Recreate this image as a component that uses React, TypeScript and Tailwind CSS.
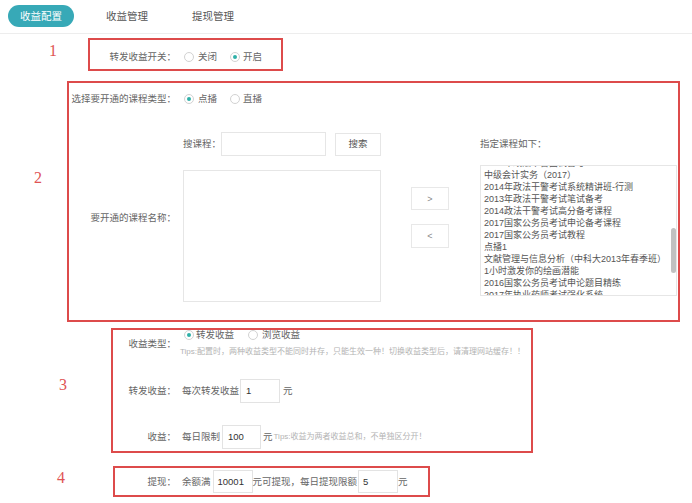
import React from "react";

function Radio({ checked }: { checked?: boolean }) {
  return (
    <span className="flex h-[10px] w-[10px] shrink-0 items-center justify-center rounded-full border border-[#d2d2d2] bg-white">
      {checked && <span className="h-[4px] w-[4px] rounded-full bg-[#2fb0a8]" />}
    </span>
  );
}

function Num({ children, cls }: { children: React.ReactNode; cls: string }) {
  return (
    <div className={"shrink-0 font-['Liberation_Serif',serif] text-[16px] leading-[20px] text-[#e05454] " + cls}>
      {children}
    </div>
  );
}

const courses = [
  "2015年政法干警面试备考",
  "中级会计实务（2017）",
  "2014年政法干警考试系统精讲班-行测",
  "2013年政法干警考试笔试备考",
  "2014政法干警考试高分备考课程",
  "2017国家公务员考试申论备考课程",
  "2017国家公务员考试教程",
  "点播1",
  "文献管理与信息分析（中科大2013年春季班）",
  "1小时激发你的绘画潜能",
  "2016国家公务员考试申论题目精练",
  "2017年执业药师考试强化系统",
];

export default function App() {
  return (
    <div className="h-[503px] w-[692px] overflow-hidden bg-white font-['Liberation_Sans','Noto_Sans_CJK_SC',sans-serif] text-[9.5px] leading-[14px] text-[#666]">
      {/* header tabs */}
      <div className="flex h-[34px] items-start border-b border-[#ededed] pl-[8px] pt-[5px]">
        <div className="flex h-[22px] items-center rounded-full bg-[#37a9b7] px-[12px] text-[10.5px] text-white">收益配置</div>
        <div className="ml-[20px] flex h-[22px] items-center px-[12px] text-[10.5px] text-[#555]">收益管理</div>
        <div className="ml-[20px] flex h-[22px] items-center px-[12px] text-[10.5px] text-[#555]">提现管理</div>
      </div>

      {/* section 1 */}
      <div className="mt-[4px] flex">
        <Num cls="w-[88px] pl-[49px] pt-[3px]">1</Num>
        <div className="flex h-[33px] w-[195px] items-center border-2 border-[#dd4b4b] pt-[4px]">
          <div className="w-[86px] text-right">转发收益开关：</div>
          <div className="ml-[8px] flex items-center">
            <Radio />
            <span className="ml-[4px]">关闭</span>
            <span className="ml-[13px]"><Radio checked /></span>
            <span className="ml-[3px]">开启</span>
          </div>
        </div>
      </div>

      {/* section 2 */}
      <div className="mt-[10px] flex">
        <Num cls="w-[67px] pl-[34px] pt-[87px]">2</Num>
        <div className="h-[241px] w-[613px] border-2 border-[#dd4b4b]">
          <div className="mt-[8px] flex h-[16px] items-center">
            <div className="w-[107px] text-right">选择要开通的课程类型：</div>
            <div className="ml-[8px] flex items-center">
              <Radio checked />
              <span className="ml-[4px]">点播</span>
              <span className="ml-[13px]"><Radio /></span>
              <span className="ml-[3px]">直播</span>
            </div>
          </div>

          <div className="mt-[25px] flex">
            <div className="w-[114px] shrink-0 pr-[7px] pt-[79px] text-right">要开通的课程名称：</div>
            <div className="w-[198px] shrink-0">
              <div className="flex h-[24px] items-center">
                <span>搜课程：</span>
                <div className="h-[24px] w-[105px] border border-[#e6e6e6]" />
                <div className="ml-[9px] flex h-[23px] w-[46px] items-center justify-center border border-[#e6e6e6] text-[#555]">搜索</div>
              </div>
              <div className="mt-[14px] h-[132px] w-[198px] border border-[#e6e6e6]" />
            </div>
            <div className="w-[99px] shrink-0 pl-[30px] pt-[55px]">
              <div className="flex h-[23px] w-[38px] items-center justify-center border border-[#e8e8e8] text-[9px] text-[#888]">&gt;</div>
              <div className="mt-[14px] flex h-[24px] w-[38px] items-center justify-center border border-[#e8e8e8] text-[9px] text-[#888]">&lt;</div>
            </div>
            <div className="w-[197px] shrink-0">
              <div className="pt-[5px] leading-[14px]">指定课程如下：</div>
              <div className="relative mt-[14px] h-[131px] overflow-hidden border border-[#e6e6e6]">
                <div className="mt-[-9px] pl-[3px] text-[9px] leading-[12px] text-[#555]">
                  {courses.map((c) => (
                    <div key={c} className="whitespace-nowrap">{c}</div>
                  ))}
                </div>
                <div className="absolute right-[0px] top-[62px] h-[45px] w-[5px] rounded-[3px] bg-[#c1c1c1]" />
              </div>
            </div>
          </div>
        </div>
      </div>

      {/* section 3 */}
      <div className="mt-[6px] flex">
        <Num cls="w-[111px] pl-[59px] pt-[47px]">3</Num>
        <div className="h-[125px] w-[422px] border-2 border-[#dd4b4b]">
          <div className="flex items-center">
            <div className="w-[63px] text-right">收益类型：</div>
            <div className="ml-[8px] flex flex-col">
              <div className="flex h-[10px] items-center leading-[10px]">
                <Radio checked />
                <span className="ml-[2px]">转发收益</span>
                <span className="ml-[14px]"><Radio /></span>
                <span className="ml-[4px]">浏览收益</span>
              </div>
              <div className="-ml-[4px] mt-[6px] whitespace-nowrap text-[8px] leading-[12px] text-[#b3b3b3]">
                Tips:配置时，两种收益类型不能同时并存，只能生效一种！切换收益类型后，请清理网站缓存！！
              </div>
            </div>
          </div>

          <div className="mt-[21px] flex h-[24px] items-center">
            <div className="w-[63px] text-right">转发收益：</div>
            <span className="ml-[6px]">每次转发收益</span>
            <div className="ml-[1px] flex h-[24px] w-[40px] items-center border border-[#e3e3e3] pl-[5px] text-[#333]">1</div>
            <span className="ml-[3px]">元</span>
          </div>

          <div className="mt-[22px] flex h-[24px] items-center">
            <div className="w-[63px] text-right">收益：</div>
            <span className="ml-[6px]">每日限制</span>
            <div className="ml-[2px] flex h-[24px] w-[39px] items-center border border-[#e3e3e3] pl-[5px] text-[#333]">100</div>
            <span className="ml-[2px]">元</span>
            <span className="ml-[1px] whitespace-nowrap text-[8px] text-[#b3b3b3]">Tips:收益为两者收益总和，不单独区分开！</span>
          </div>
        </div>
      </div>

      {/* section 4 */}
      <div className="mt-[13px] flex">
        <Num cls="w-[113px] pl-[57px] pt-[2px]">4</Num>
        <div className="flex h-[31px] w-[317px] items-center border-2 border-[#dd4b4b]">
          <div className="w-[61px] text-right">提现：</div>
          <span className="ml-[6px]">余额满</span>
          <div className="ml-[2px] flex h-[23px] w-[40px] items-center border border-[#e3e3e3] pl-[4px] text-[#333]">10001</div>
          <span className="whitespace-nowrap">元可提现，每日提现限额</span>
          <div className="ml-[1px] flex h-[23px] w-[40px] items-center border border-[#e3e3e3] pl-[4px] text-[#333]">5</div>
          <span>元</span>
        </div>
      </div>
    </div>
  );
}
